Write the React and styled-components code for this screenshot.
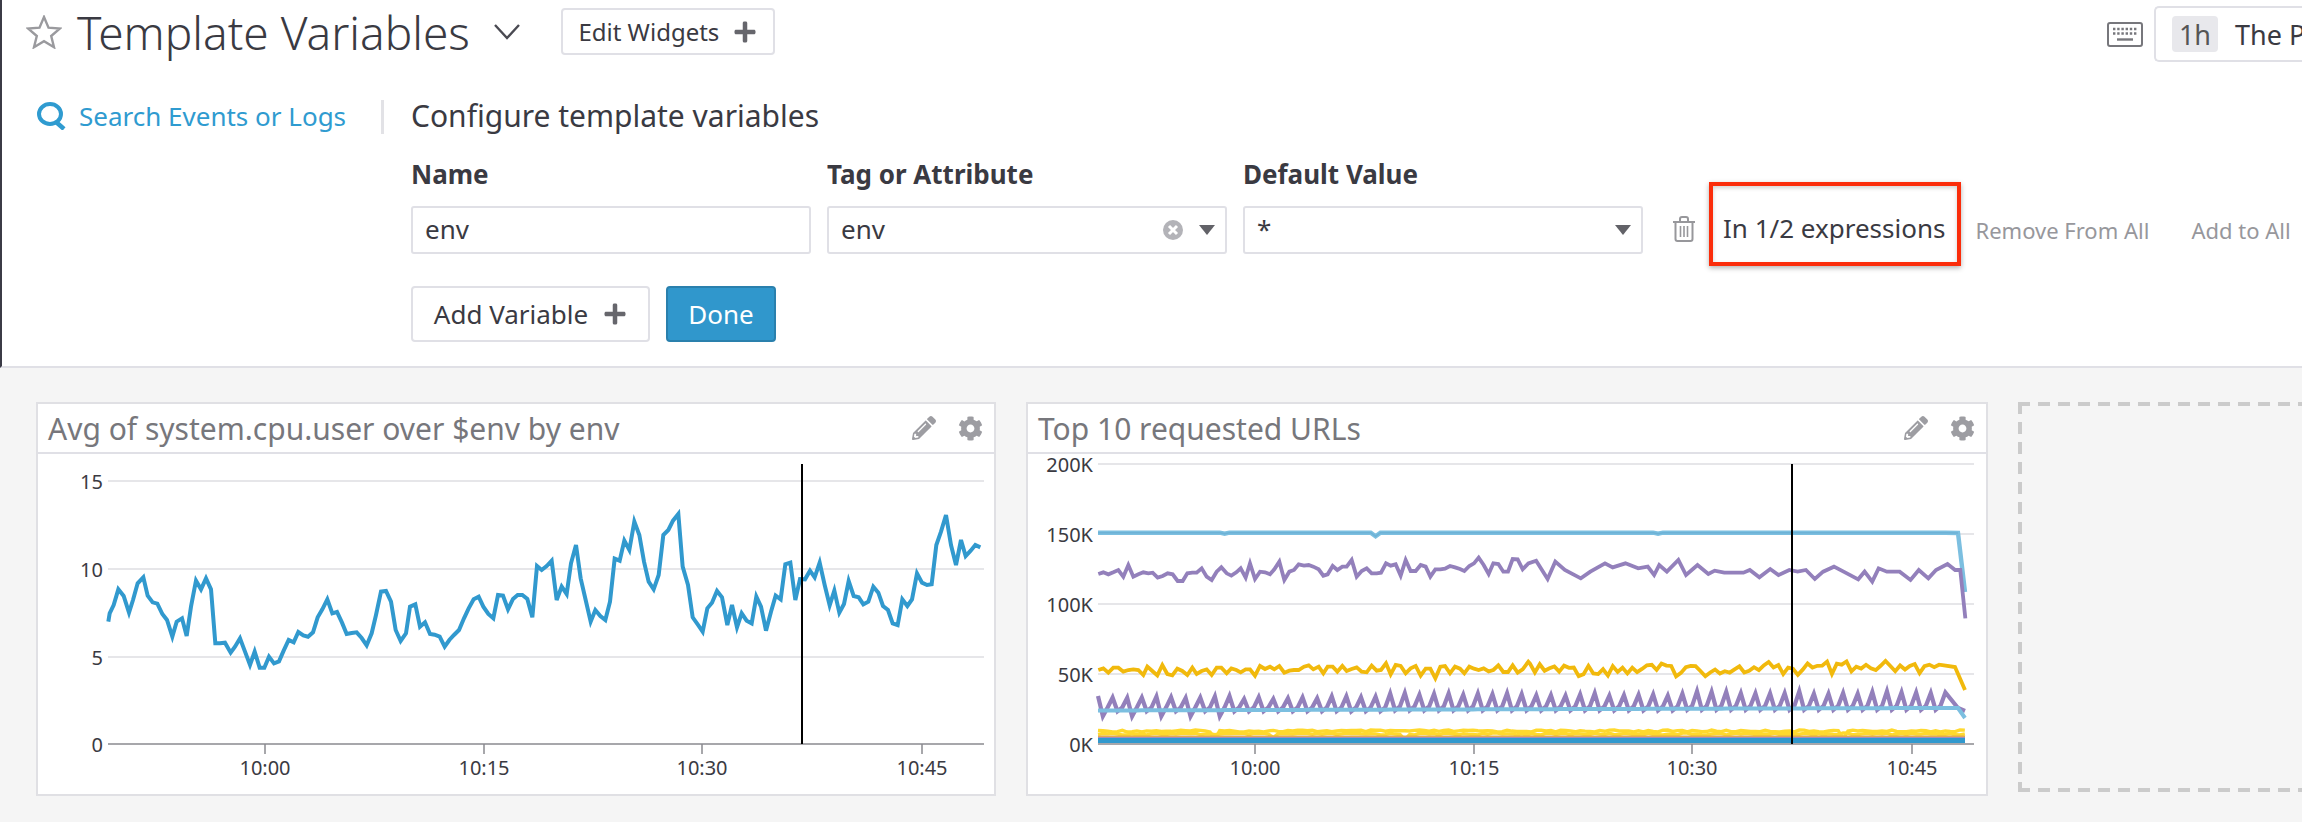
import React from 'react'
import styled, { createGlobalStyle } from 'styled-components'
import { FaCog, FaPencilAlt, FaPlus } from 'react-icons/fa'

// traced from the widgets, [x, y] pairs in crop pixels
const CPU_A = [10,365,14,340,26,315,40,268,56,288,72,338,84,300,98,250,115,232,128,287,143,307,157,311,172,342,186,360,202,410,215,365,231,355,245,408,258,320,273,242,288,268,303,235,318,268,331,430,345,430,360,428,377,458,390,440,405,415,420,455,435,495,449,455,464,503,478,503,492,470,507,490,522,484,536,452,551,420,566,427,580,396,595,406,609,410,624,397,638,352,652,328,667,298,682,340,696,336,711,368,725,402,740,399,755,397,770,414,785,436,800,400,813,345,828,275,843,273,858,305,872,390,887,423,903,400,915,320,931,313,945,380,960,367,975,402,989,404,1004,410,1019,440,1033,420,1047,405,1062,390,1077,355,1091,325,1106,298,1121,290,1135,320,1150,342,1165,355,1179,285,1194,287,1209,328,1224,297,1238,285,1252,285,1267,297,1282,352,1296,198,1310,210,1325,198]
const CPU_B = [20,182,35,300,50,260,65,282,78,190,93,135,107,235,122,300,137,365,151,330,166,348,181,360,195,305,209,176,224,182,238,122,253,150,268,65,283,105,297,185,311,245,326,268,341,225,355,105,370,90,384,62,400,42,413,200,429,255,443,352,458,373,473,395,487,325,501,308,516,273,531,292,547,375,561,315,576,382,590,340,605,362,620,370,634,290,648,320,663,392,678,335,692,287,707,298,721,193,736,188,751,300,765,237,780,238,795,212,809,232,824,188,839,255,854,316,868,272,883,338,897,312,911,243,926,288,941,292,955,313,970,305,985,260,1000,278,1014,318,1029,330,1043,370,1058,375,1072,298,1087,318,1101,298,1116,220,1131,248,1146,255,1160,253,1174,135,1188,95,1203,45,1218,135,1233,195,1248,120,1262,168,1277,152,1291,135,1306,142]
const PURPLE_A = [205,192,220,187,235,193,250,187,265,180,280,200,295,165,310,200,325,193,340,187,355,190,368,188,383,203,398,198,413,190,428,193,443,213,458,213,472,190,487,188,500,188,515,175,530,200,545,210,560,185,574,172,590,190,604,197,619,187,632,175,647,203,660,160,675,207,690,185,705,187,720,193,733,178,748,155,763,210,778,185,792,180,806,163,822,167,836,165,850,170,866,178,880,197,893,193,908,168,922,180,937,170,950,170,965,150,980,200,995,183,1010,175,1025,190,1040,190,1053,188,1068,160,1082,167,1097,163,1112,197,1127,150,1142,183,1157,183,1172,165,1187,170,1201,200,1216,178,1231,178,1245,176,1260,168,1275,172,1290,177,1303,183,1318,168,1332,160,1346,143,1361,165,1376,192,1390,160,1405,162,1420,185,1434,185,1448,147,1463,148,1478,178,1495,160]
const PURPLE_B = [825,512,843,567,855,515,870,540,895,565,910,545,933,520,945,532,965,520,985,535,1000,530,1010,555,1018,525,1030,545,1048,510,1060,555,1078,525,1095,552,1105,542,1120,548,1150,548,1160,540,1175,562,1192,537,1205,555,1222,540,1235,545,1248,540,1262,567,1275,545,1292,530,1310,548,1330,568,1340,545,1352,575,1362,535,1375,545,1395,545,1412,570,1425,540,1440,565,1452,540,1470,522,1482,540,1490,540,1498,685]
const GOLD_A = [205,480,220,475,235,488,250,473,265,473,280,485,295,480,310,478,325,480,340,495,352,470,367,483,382,496,397,465,412,492,427,496,442,476,457,483,472,495,487,473,500,492,515,483,530,478,545,495,560,473,574,473,590,490,604,475,619,480,632,487,647,478,660,478,675,497,690,468,705,477,720,470,733,478,748,468,763,488,778,482,792,480,806,480,822,470,836,466,850,478,866,470,880,490,893,470,908,470,922,485,937,468,950,483,965,477,980,472,995,485,1010,487,1025,467,1040,482,1053,480,1068,460,1082,493,1097,465,1112,468,1127,490,1142,475,1157,468,1172,497,1187,476,1201,476,1216,505,1231,470,1245,468,1260,490,1275,470,1290,476,1303,490,1318,470,1332,476,1346,480,1361,475,1376,484,1390,480,1405,466,1420,486,1434,486,1448,466,1463,488,1478,478,1495,455]

const fromCrop = (pairs, ox, oy, sx, sy) => {
    const out = []
    for (let i = 0; i < pairs.length; i += 2) {
        out.push([ox + pairs[i] / sx, oy + pairs[i + 1] / sy])
    }
    return out
}

const jitter = i => {
    const v = Math.sin(i * 12.9898) * 43758.5453
    return v - Math.floor(v)
}

const STEP = 4.87
const samples = (from, to, fn) => {
    const out = []
    for (let x = from, i = 0; x <= to; x += STEP, i++) out.push([x, fn(x, i)])
    return out
}

const dip = (x, at, depth) => (Math.abs(x - at) < 3 ? depth : 0)

const cpuLine = [...fromCrop(CPU_A, 105, 500, 3, 3), ...fromCrop(CPU_B, 545, 500, 3, 3)]

const purpleTop = [...fromCrop(PURPLE_A, 40, 510, 3, 3), ...fromCrop(PURPLE_B, 20, 390, 1.568, 3)]

const goldLine = [
    ...fromCrop(GOLD_A, 40, 510, 3, 3),
    ...samples(540, 958, (x, i) => 670 + (jitter(i) - 0.5) * 13 - (i % 4 === 1 ? 3 : 0)),
    [965, 667],
    [975, 690],
]

const skyTop = [
    ...samples(108, 960, x => 532.7 + dip(x, 233, 1) + dip(x, 385, 3.5) + dip(x, 667, 1)),
    [968, 533],
    [975, 592],
]

const sawtooth = samples(108, 960, (x, i) => {
    const phase = i % 3
    const lift = i < 60 ? 1 : i > 120 ? -4 : -2
    if (phase === 0) return 695 + lift + jitter(i) * 3
    if (phase === 1) return (i < 30 && i % 2 ? 716 : 711) + lift * 0.3
    return 707 + lift * 0.3
})
sawtooth.push([968, 708], [975, 711])

const skyLow = [...samples(108, 960, x => 710.5 - (x - 108) * 0.003), [968, 708], [975, 718]]

const yellowA = samples(108, 975, (x, i) => 731 + (jitter(i + 7) - 0.5) * 2 + dip(x, 225, 8) + dip(x, 852, 7))
const yellowB = samples(108, 975, (x, i) => 734 + (jitter(i + 31) - 0.5) * 2 + dip(x, 285, 4) + dip(x, 415, 5))

const CHARTS = {
    cpu: {
        width: 956,
        grid: [[481, '15'], [569, '10'], [657, '5']],
        baseLabel: '0',
        series: [{ points: cpuLine, color: '#3199ce', width: 4 }],
    },
    urls: {
        width: 958,
        grid: [[464, '200K'], [534, '150K'], [604, '100K'], [674, '50K']],
        baseLabel: '0K',
        series: [
            { points: skyTop, color: '#7cbfe0', width: 4.4 },
            { points: skyTop.slice(0, -1), color: '#6db2d6', width: 1.6 },
            { points: purpleTop, color: '#9380bb', width: 3.8 },
            { points: goldLine, color: '#f1b90c', width: 3.8 },
            { points: sawtooth, color: '#9380bb', width: 4.2 },
            { points: skyLow, color: '#7cbfe0', width: 4 },
            { points: yellowB, color: '#ffd92e', width: 3.4 },
            { points: yellowA, color: '#ffd92e', width: 3.4 },
            { points: [[108, 736.5], [975, 736.5]], color: '#e2ab4f', width: 2 },
            { points: [[108, 738], [975, 738]], color: '#a58bc0', width: 2 },
            { points: [[108, 740.5], [975, 740.5]], color: '#3199ce', width: 5 },
        ],
    },
}

const TICKS = [[265, '10:00'], [484, '10:15'], [702, '10:30'], [922, '10:45']]

function Chart({ data }) {
    return (
        <ChartSvg width={data.width} height={340} viewBox={`38 454 ${data.width} 340`}>
            {data.grid.map(([y, label]) => (
                <g key={label}>
                    <GridLine x1={108} x2={984} y1={y} y2={y} />
                    <AxisLabel x={103} y={y} textAnchor='end' dominantBaseline='central'>{label}</AxisLabel>
                </g>
            ))}
            <AxisLabel x={103} y={744} textAnchor='end' dominantBaseline='central'>{data.baseLabel}</AxisLabel>
            {data.series.map((s, i) => (
                <polyline
                    key={i}
                    points={s.points.map(p => p.join(',')).join(' ')}
                    fill='none'
                    stroke={s.color}
                    strokeWidth={s.width}
                    strokeLinejoin='miter'
                />
            ))}
            <AxisLine x1={108} x2={984} y1={744} y2={744} />
            {TICKS.map(([x, label]) => (
                <g key={label}>
                    <AxisLine x1={x} x2={x} y1={744} y2={754} />
                    <AxisLabel x={x} y={767} textAnchor='middle' dominantBaseline='central'>{label}</AxisLabel>
                </g>
            ))}
            <line x1={802} x2={802} y1={464} y2={744} stroke='#000' strokeWidth={2} />
        </ChartSvg>
    )
}

function Widget({ title, data, wide }) {
    return (
        <WidgetCard $wide={wide}>
            <WidgetHeader>
                <WidgetTitle>{title}</WidgetTitle>
                <WidgetTools>
                    <FaPencilAlt size={24} />
                    <FaCog size={25} />
                </WidgetTools>
            </WidgetHeader>
            <Chart data={data} />
        </WidgetCard>
    )
}

export default function App() {
    return (
        <Page>
            <GlobalStyle />
            <TopPanel>
                <TopBar>
                    <svg width='36' height='34' viewBox='0 0 36 34'>
                        <polygon
                            points='18,2 22.5,12.6 34,13.5 25.2,21 28,32.2 18,26.2 8,32.2 10.8,21 2,13.5 13.5,12.6'
                            fill='none'
                            stroke='#9a9a9e'
                            strokeWidth='2.4'
                        />
                    </svg>
                    <Title>Template Variables</Title>
                    <svg width='26' height='16' viewBox='0 0 26 16'>
                        <polyline points='1,1 13,14 25,1' fill='none' stroke='#4a4a52' strokeWidth='2.4' />
                    </svg>
                    <EditButton>Edit Widgets<ButtonPlus /></EditButton>
                    <TimeArea>
                        <svg width='36' height='25' viewBox='0 0 36 25'>
                            <rect x='1' y='1' width='34' height='23' rx='2' fill='none' stroke='#77777c' strokeWidth='2' />
                            <path d='M6 7h24M6 11.5h24' stroke='#77777c' strokeWidth='2.4' strokeDasharray='2.4 1.8' fill='none' />
                            <path d='M10 17.5h16' stroke='#77777c' strokeWidth='2.4' fill='none' />
                        </svg>
                        <TimeBox>
                            <TimeChip>1h</TimeChip>
                            The P
                        </TimeBox>
                    </TimeArea>
                </TopBar>
                <EditorBody>
                    <SearchColumn>
                        <SearchLink>
                            <svg width='30' height='28' viewBox='0 0 30 28'>
                                <ellipse cx='13' cy='12' rx='11' ry='10' fill='none' stroke='#2f9bd0' strokeWidth='4' />
                                <line x1='19' y1='20' x2='27' y2='27' stroke='#2f9bd0' strokeWidth='4.5' />
                            </svg>
                            Search Events or Logs
                        </SearchLink>
                    </SearchColumn>
                    <ConfigColumn>
                        <ConfigTitle>Configure template variables</ConfigTitle>
                        <LabelRow>
                            <FieldLabel>Name</FieldLabel>
                            <FieldLabel>Tag or Attribute</FieldLabel>
                            <FieldLabel>Default Value</FieldLabel>
                        </LabelRow>
                        <InputRow>
                            <FieldBox>env</FieldBox>
                            <FieldBox>
                                env
                                <FieldIcons>
                                    <svg width='20' height='20' viewBox='0 0 20 20'>
                                        <circle cx='10' cy='10' r='10' fill='#b3b3b8' />
                                        <path d='M6 6l8 8M14 6l-8 8' stroke='#fff' strokeWidth='3' />
                                    </svg>
                                    <Caret />
                                </FieldIcons>
                            </FieldBox>
                            <FieldBox>
                                *
                                <FieldIcons><Caret /></FieldIcons>
                            </FieldBox>
                            <TrashIcon width='24' height='26' viewBox='0 0 24 26'>
                                <path d='M1 6h22M8 6V3a2 2 0 0 1 2-2h4a2 2 0 0 1 2 2v3M3.500 6v17a2 2 0 0 0 2 2h13a2 2 0 0 0 2-2V6' fill='none' stroke='#97979b' strokeWidth='2' />
                                <path d='M8.500 10v11M12 10v11M15.500 10v11' stroke='#97979b' strokeWidth='1.600' />
                            </TrashIcon>
                            <ExpressionCount>
                                In 1/2 expressions
                                <Highlight />
                            </ExpressionCount>
                            <MutedAction>Remove From All</MutedAction>
                            <MutedAction>Add to All</MutedAction>
                        </InputRow>
                        <ButtonRow>
                            <AddButton>Add Variable<ButtonPlus /></AddButton>
                            <DoneButton>Done</DoneButton>
                        </ButtonRow>
                    </ConfigColumn>
                </EditorBody>
            </TopPanel>
            <WidgetRow>
                <Widget title='Avg of system.cpu.user over $env by env' data={CHARTS.cpu} />
                <Widget title='Top 10 requested URLs' data={CHARTS.urls} wide />
                <EmptySlot />
            </WidgetRow>
        </Page>
    )
}

const GlobalStyle = createGlobalStyle`
    html, body {
        margin: 0;
        padding: 0;
        background: #f5f5f5;
    }
    body {
        font-family: "Noto Sans", "Open Sans", sans-serif;
        color: #3a3a42;
        overflow: hidden;
    }
`
const Page = styled.div`
    width: 2302px;
    height: 822px;
    overflow: hidden;
    background: #f5f5f5;
`
const TopPanel = styled.section`
    box-sizing: border-box;
    height: 368px;
    background: #fff;
    border-left: 2px solid #3b3b46;
    border-bottom: 2px solid #e0e0e6;
`
const TopBar = styled.header`
    display: flex;
    align-items: center;
    height: 64px;
    padding-left: 24px;
`
const Title = styled.h1`
    margin: 0 24px 0 15px;
    font-size: 46px;
    font-weight: 300;
    line-height: 60px;
    color: #3a3a42;
    white-space: nowrap;
`
const BaseButton = styled.button`
    display: inline-flex;
    align-items: center;
    justify-content: center;
    box-sizing: border-box;
    padding: 0;
    background: #fff;
    border: 2px solid #e0e0e6;
    border-radius: 4px;
    font-family: inherit;
    color: #3a3a42;
`
const EditButton = styled(BaseButton)`
    width: 214px;
    height: 47px;
    gap: 14px;
    margin-left: 41px;
    margin-top: -1px;
    font-size: 24px;
`
const ButtonPlus = styled(FaPlus)`
    width: 24px;
    height: 24px;
    color: #66666c;
`
const TimeArea = styled.div`
    display: flex;
    align-items: center;
    gap: 11px;
    margin-left: auto;
    margin-top: 4px;
`
const TimeBox = styled.div`
    box-sizing: border-box;
    display: flex;
    align-items: center;
    gap: 17px;
    width: 148px;
    height: 56px;
    padding-left: 16px;
    border: 2px solid #e0e0e6;
    border-right: none;
    border-radius: 5px 0 0 5px;
    font-size: 27px;
    white-space: nowrap;
`
const TimeChip = styled.span`
    display: flex;
    align-items: center;
    justify-content: center;
    flex-shrink: 0;
    width: 46px;
    height: 36px;
    background: #e8e8ec;
    border-radius: 4px;
    color: #555;
`
const EditorBody = styled.div`
    display: flex;
    padding-top: 36px;
`
const SearchColumn = styled.div`
    box-sizing: border-box;
    width: 382px;
    height: 34px;
    padding-left: 35px;
    border-right: 3px solid #e2e2e6;
`
const SearchLink = styled.a`
    display: flex;
    align-items: center;
    gap: 12px;
    height: 32px;
    font-size: 26px;
    color: #2f9bd0;
    white-space: nowrap;
`
const ConfigColumn = styled.div`
    margin-left: 27px;
`
const ConfigTitle = styled.h2`
    margin: 0;
    height: 34px;
    font-size: 30px;
    font-weight: 400;
    line-height: 32px;
    color: #3a3a42;
    white-space: nowrap;
`
const LabelRow = styled.div`
    display: flex;
    gap: 16px;
    margin-top: 20px;
    height: 52px;
`
const FieldLabel = styled.label`
    width: 400px;
    font-size: 26px;
    font-weight: 700;
    line-height: 40px;
    color: #3a3a42;
`
const InputRow = styled.div`
    display: flex;
    align-items: center;
    gap: 16px;
    height: 48px;
    white-space: nowrap;
`
const FieldBox = styled.div`
    box-sizing: border-box;
    display: flex;
    align-items: center;
    justify-content: space-between;
    flex-shrink: 0;
    width: 400px;
    height: 48px;
    padding: 0 10px 2px 12px;
    background: #fff;
    border: 2px solid #e0e0e6;
    border-radius: 3px;
    font-size: 26px;
`
const FieldIcons = styled.span`
    display: flex;
    align-items: center;
    gap: 16px;
    margin-bottom: -2px;
`
const Caret = styled.span`
    width: 0;
    height: 0;
    border-left: 8px solid transparent;
    border-right: 8px solid transparent;
    border-top: 10px solid #626268;
`
const TrashIcon = styled.svg`
    margin-left: 13px;
    margin-top: -2px;
`
const ExpressionCount = styled.div`
    position: relative;
    margin-left: 11px;
    margin-top: -4px;
    font-size: 26px;
    line-height: 32px;
    color: #3a3a42;
`
const Highlight = styled.span`
    position: absolute;
    left: -14px;
    top: -30px;
    width: 252px;
    height: 84px;
    box-sizing: border-box;
    border: 4px solid #fb2d0b;
    box-shadow: 0 2px 5px rgba(0, 0, 0, 0.3), inset 0 2px 4px rgba(0, 0, 0, 0.18);
`
const MutedAction = styled.span`
    margin-left: 14px;
    font-size: 22px;
    color: #97979c;
    &:last-child {
        margin-left: 26px;
    }
`
const ButtonRow = styled.div`
    display: flex;
    gap: 16px;
    margin-top: 32px;
`
const AddButton = styled(BaseButton)`
    width: 239px;
    height: 56px;
    gap: 15px;
    font-size: 26px;
`
const DoneButton = styled(BaseButton)`
    width: 110px;
    height: 56px;
    background: #3097cc;
    border-color: #2a80ad;
    font-size: 26px;
    color: #fff;
`
const WidgetRow = styled.div`
    display: flex;
    gap: 30px;
    padding: 34px 0 0 36px;
`
const WidgetCard = styled.article`
    box-sizing: border-box;
    flex-shrink: 0;
    width: ${props => (props.$wide ? '962px' : '960px')};
    height: 394px;
    background: #fff;
    border: 2px solid #e0e0e4;
`
const WidgetHeader = styled.div`
    box-sizing: border-box;
    display: flex;
    align-items: center;
    justify-content: space-between;
    height: 50px;
    padding: 0 11px 0 10px;
    border-bottom: 2px solid #e0e0e6;
`
const WidgetTitle = styled.h3`
    margin: 0;
    font-size: 30px;
    font-weight: 400;
    color: #77777c;
    white-space: nowrap;
`
const WidgetTools = styled.div`
    display: flex;
    align-items: center;
    gap: 22px;
    color: #9d9da2;
`
const ChartSvg = styled.svg`
    display: block;
    overflow: visible;
`
const GridLine = styled.line`
    stroke: #e6e6e9;
    stroke-width: 2;
`
const AxisLine = styled.line`
    stroke: #8a8a8f;
    stroke-width: 1.500;
`
const AxisLabel = styled.text`
    font-size: 20px;
    fill: #3a3a42;
`
const EmptySlot = styled.div`
    flex-shrink: 0;
    width: 400px;
    height: 390px;
    background-image:
        repeating-linear-gradient(90deg, #cbcbcb 0 12px, transparent 12px 20px),
        repeating-linear-gradient(90deg, #cbcbcb 0 12px, transparent 12px 20px),
        repeating-linear-gradient(180deg, #cbcbcb 0 12px, transparent 12px 20px);
    background-size: 100% 4px, 100% 4px, 4px 100%;
    background-position: 0 0, 0 100%, 0 0;
    background-repeat: no-repeat;
`
